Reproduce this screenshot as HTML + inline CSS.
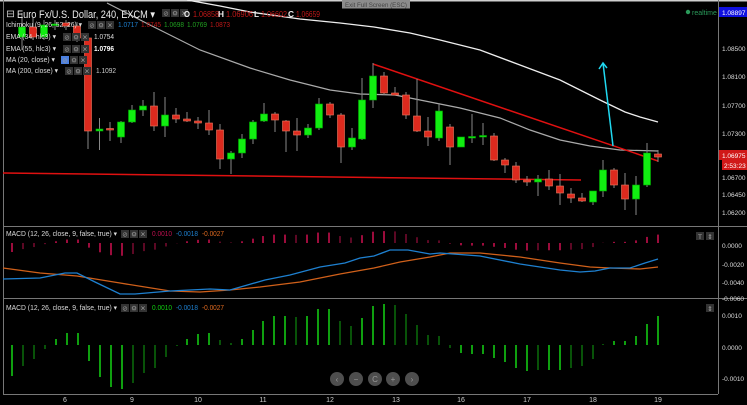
<!DOCTYPE html>
<html><head><meta charset="utf-8"><style>
body{margin:0;width:747px;height:405px;background:#000;overflow:hidden;font-family:"Liberation Sans",sans-serif;}
svg{position:absolute;left:0;top:0}
.t{font-family:"Liberation Sans",sans-serif}
</style></head><body>
<svg id="s" width="747" height="405" xmlns="http://www.w3.org/2000/svg">
<rect width="747" height="405" fill="#000"/>
<rect x="0" y="0" width="747" height="1.5" fill="#cfcfcf"/>
<line x1="3.5" y1="0" x2="3.5" y2="394" stroke="#777"/>
<line x1="718.5" y1="0" x2="718.5" y2="394" stroke="#777"/>
<line x1="3" y1="226.5" x2="747" y2="226.5" stroke="#777"/>
<line x1="3" y1="298.5" x2="747" y2="298.5" stroke="#777"/>
<line x1="3" y1="394.5" x2="718" y2="394.5" stroke="#777"/>
<g id="g"></g>
</svg>
<script>
var g=document.getElementById('g'),h='';
h+='<polyline fill="none" stroke="#aaa" stroke-width="1.2" points="107,3 150,25 200,50 250,68 290,80 330,90 360,94 395,95 420,100 460,108 500,118 530,130 560,140 590,146 620,150 658,151"/>';
h+='<polyline fill="none" stroke="#eee" stroke-width="1.3" points="187,0 220,6 250,12 300,19 340,23 374,27 410,33 440,40 480,50 520,65 560,80 600,100 625,112 640,117 658,122"/>';
h+='<line x1="3" y1="173" x2="581" y2="180" stroke="#e01010" stroke-width="1.5"/>';
h+='<line x1="373" y1="64" x2="658" y2="161" stroke="#e01010" stroke-width="1.5"/>';
var C=[[22,27,37,13,50,'g'],[33,27,37,18,40,'r'],[44,25,37,20,40,'g'],[55,24,25,20,30,'g'],[66,23,26,20,30,'r'],[77,26,38,22,42,'r'],
[88,38,131,36,149,'r'],[99.5,129,131,118,150,'g'],[110,128.5,129.5,122,141,'r'],[121,122,137,121,143,'g'],[132,110,122,105,123,'g'],[143,106,110,100,116,'g'],
[154,106,126,92,131,'r'],[165,115,126,97,137,'g'],[176,115,119,108,123,'r'],[187,119,121,112,122,'r'],[198,121,123,117,129,'r'],[209,123,130,110,135,'r'],
[220,130,159,124,169,'r'],[231,153,159,151,174,'g'],[242,139,153,134,158,'g'],[253,122,139,120,144,'g'],[264,114,121,103,122,'g'],[275,114,120,112,132,'r'],
[286,121,131,120,152,'r'],[297,131,135,118,151,'r'],[308,128,135,124,138,'g'],[319,104,128,98,130,'g'],[330,104,115,102,118,'r'],[341,115,147,113,163,'r'],
[352,138,147,128,150,'g'],[362,100,139,78,140,'g'],[373,76,100,63,108,'g'],[384,76,93,72,95,'r'],[395,93,95,87,95,'r'],[406,95,115,92,119,'r'],
[417,116,131,79,132,'r'],[428,131,137,117,146,'r'],[439,111,138,103,141,'g'],[450,127,147,124,165,'r'],[461,137,147,137,147,'g'],[472,136.5,137.5,114,143,'g'],
[483,135.5,136.5,123,145,'g'],[494,136,160,133,161,'r'],[505,160,165,158,173,'r'],[516,166,180,162,183,'r'],[527,180,182,176,186,'r'],[538,179,182,175,196,'g'],
[549,179,186,170,190,'r'],[560,186,193,174,205,'r'],[571,194,198,188,203,'r'],[582,198,201,193,202,'r'],[593,191,202,191,205,'g'],[603,170,191,160,197,'g'],
[614,170,185,168,188,'r'],[625,185,199,173,210,'r'],[636,185,199,176,215,'g'],[647,153,185,143,187,'g'],[658,154,157,150,162,'r']];
C.forEach(function(c){var col=c[5]=='g'?'#11ee11':'#dd2a1e';
h+='<line x1="'+c[0]+'" y1="'+c[3]+'" x2="'+c[0]+'" y2="'+c[4]+'" stroke="#888" stroke-width="1"/>';
h+='<rect x="'+(c[0]-3.5)+'" y="'+c[1]+'" width="7" height="'+Math.max(1.5,c[2]-c[1])+'" fill="'+col+'" stroke="'+(c[5]=='g'?'#0a0':'#f07a60')+'" stroke-width="0.6"/>';});
h+='<polyline fill="none" stroke="#20d8f0" stroke-width="1.5" points="613,146 603,63"/><polyline fill="none" stroke="#20d8f0" stroke-width="1.5" points="599,69 603,63 607,68"/>';
var M={12:-31,23:-21,34:-14,45:-4,56:6,67:12,78:12,89:-16,100:-32,111:-42,122:-44,133:-38,144:-28,155:-23,166:-12,177:-1,187:6,198:11,209:12,220:5,231:2,242:6,253:15,263:24,274:29,285:29,296:28,307:29,318:36,329:36,340:24,351:19,362:27,373:39,384:41,395:40,406:31,417:20,428:10,439:9,450:-3,461:-8,472:-9,483:-9,494:-13,505:-17,516:-23,527:-26,538:-25,549:-25,560:-25,571:-23,582:-21,593:-14,603:1,614:4,625:4,636:9,647:21,658:29};
var prev=0;
for(var k in M){var v=M[k],x=+k;var grow=Math.abs(v)>=Math.abs(prev);
var gc=grow?'#14d414':'#0b6e0b';var rc=grow?'#d01050':'#7a0a30';
h+='<line x1="'+x+'" y1="345" x2="'+x+'" y2="'+(345-v)+'" stroke="'+gc+'" stroke-width="1.5"/>';
h+='<line x1="'+x+'" y1="243" x2="'+x+'" y2="'+(243-v*0.29)+'" stroke="'+rc+'" stroke-width="1.5"/>';prev=v;}
h+='<polyline fill="none" stroke="#d0601a" stroke-width="1.3" points="3,268 40,273 77,276 120,283 170,291 200,292 230,290 260,287 300,282 340,274 374,268 400,262 430,257 450,253 480,253 520,257 560,263 590,267 610,268 640,269 658,267"/>';
h+='<polyline fill="none" stroke="#1e80d0" stroke-width="1.3" points="3,279 40,278 65,273 77,273 95,282 120,294 135,294 170,291 210,289 230,290 265,280 290,275 320,267 345,263 360,258 374,256 390,250 408,250 430,254 440,253 480,256 520,264 560,270 580,272 595,271 610,268 630,268 645,263 658,259"/>';
function T(x,y,s,c,sz,a){h+='<text class="t" x="'+x+'" y="'+y+'" fill="'+c+'" font-size="'+sz+'"'+(a?' '+a:'')+'>'+s+'</text>';}
function L(x,y,s,c,sz,w,b){h+='<text class="t" x="'+x+'" y="'+y+'" fill="'+c+'" font-size="'+sz+'" textLength="'+w+'" lengthAdjust="spacingAndGlyphs"'+(b?' font-weight="bold"':'')+'>'+s+'</text>';}
[[48,'1.08500'],[76,'1.08100'],[105,'1.07700'],[133,'1.07300'],[177,'1.06700'],[194,'1.06450'],[212,'1.06200'],[245,'0.0000'],[264,'-0.0020'],[282,'-0.0040'],[298,'-0.0060'],[315,'0.0010'],[347,'0.0000'],[378,'-0.0010']].forEach(function(a){T(722,a[0]+3,a[1],'#ddd',6.5);});
h+='<rect x="719" y="7" width="28" height="10" fill="#1010e0"/>';T(722,15,'1.08897','#fff',6.5);
h+='<rect x="719" y="150" width="28" height="10" fill="#d01818"/>';T(722,158,'1.06975','#fff',6.5);
h+='<rect x="722" y="160" width="25" height="10" fill="#d01818"/>';T(724,168,'2:53:23','#fff',6.5);
[[65,'6'],[132,'9'],[198,'10'],[263,'11'],[330,'12'],[396,'13'],[461,'16'],[527,'17'],[593,'18'],[658,'19']].forEach(function(a){T(a[0],402,a[1],'#ccc',7,'text-anchor="middle"');});
h+='<rect x="342" y="0" width="68" height="8.5" fill="#8c8c8c"/>';L(345,7,'Exit Full Screen (ESC)','#444',6.5,62);
h+='<circle cx="688" cy="12" r="2.2" fill="#2a9a5a"/>';T(692,15,'realtime','#2a9a5a',7);
L(6,17,'⊟','#ccc',10,9);L(17,18,'Euro Fx/U.S. Dollar, 240, EXCM ▾','#eee',11,138);
function btns(x,y,hl){for(var i=0;i<3;i++){h+='<rect x="'+(x+i*9)+'" y="'+y+'" width="8" height="8" fill="'+(hl&&i==0?'#4a7fe0':'#333')+'"/>';
h+='<text class="t" x="'+(x+i*9+4)+'" y="'+(y+6.5)+'" fill="#999" font-size="6.5" text-anchor="middle">'+['⊘','⚙','✕'][i]+'</text>';}}
btns(162,9);
L(184,17,'O','#eee',8,6,1);L(193,17,'1.06858','#c01818',8,26);L(218,17,'H','#eee',8,6,1);L(226,17,'1.06906','#c01818',8,27);
L(254,17,'L','#eee',8,5,1);L(261,17,'1.06602','#c01818',8,26);L(288,17,'C','#eee',8,6,1);L(296,17,'1.06659','#c01818',8,24);
L(6,27,'Ichimoku (9, 26, 52, 26) ▾','#ddd',7.5,76);btns(88,21);
L(118,27,'1.0717','#1e80d0',7.5,20);L(141,27,'1.0745','#c01818',7.5,20);L(164,27,'1.0698','#20a020',7.5,20);L(187,27,'1.0769','#20a020',7.5,20);L(210,27,'1.0873','#c01818',7.5,20);
L(6,39,'EMA (34, hlc3) ▾','#ddd',7.5,50);btns(63,33);L(94,39,'1.0754','#ddd',7.5,20);
L(6,51,'EMA (55, hlc3) ▾','#ddd',7.5,50);btns(63,45);L(94,51,'1.0796','#fff',7.5,20,1);
L(6,62,'MA (20, close) ▾','#ddd',7.5,49);btns(61,56,1);
L(6,73,'MA (200, close) ▾','#ddd',7.5,52);btns(65,67);L(96,73,'1.1092','#ccc',7.5,20);
L(6,236,'MACD (12, 26, close, 9, false, true) ▾','#ddd',7,111);btns(121,230);L(152,236,'0.0010','#c01050',7,20);L(176,236,'-0.0018','#1e80d0',7,22);L(202,236,'-0.0027','#e06a20',7,22);
L(6,310,'MACD (12, 26, close, 9, false, true) ▾','#ddd',7,111);btns(121,304);L(152,310,'0.0010','#10d010',7,20);L(176,310,'-0.0018','#1e80d0',7,22);L(202,310,'-0.0027','#e06a20',7,22);
h+='<rect x="696" y="232" width="8" height="8" fill="#333"/><rect x="706" y="232" width="8" height="8" fill="#333"/><rect x="706" y="304" width="8" height="8" fill="#333"/>';
T(700,239,'T','#aaa',6.5,'text-anchor="middle"');T(710,239,'⇕','#aaa',6.5,'text-anchor="middle"');T(710,311,'⇕','#aaa',6.5,'text-anchor="middle"');
[[337,'‹'],[356,'−'],[375,'C'],[393,'+'],[412,'›']].forEach(function(a){h+='<circle cx="'+a[0]+'" cy="379" r="7" fill="#4e4e4e"/>';T(a[0],382,a[1],'#999',8,'text-anchor="middle"');});
g.innerHTML=h;
</script>
</body></html>
